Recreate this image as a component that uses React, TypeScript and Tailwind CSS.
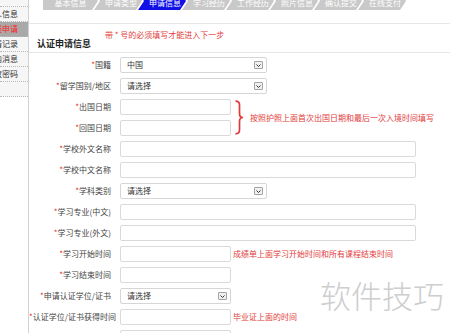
import React from "react";

const steps = ["基本信息", "申请类型", "申请信息", "学习经历", "工作经历", "照片信息", "确认提交", "在线支付"];

const sideItems = ["", "个人信息", "在线申请", "申请记录", "站内消息", "修改密码", ""];

type W = "S" | "M" | "L";
const widthCls: Record<W, string> = { S: "w-[111px]", M: "w-[147px]", L: "w-[296px]" };

type Row = { label: string; kind: "select" | "input"; w: W; value?: string; note?: string };

const Label = ({ text }: { text: string }) => (
  <div className="w-[82px] shrink-0 whitespace-nowrap text-right text-[8px] leading-[10px] text-[#444]">
    <span className="text-[#e52b2b]">*</span>
    {text}
  </div>
);

const Arrow = () => (
  <span className="flex h-[8px] w-[9px] items-center justify-center rounded-[1px] border border-[#a3a3a3] bg-[#f1f1f1]">
    <svg width="5" height="3" viewBox="0 0 5 3">
      <path d="M0.5 0.5 L2.5 2.5 L4.5 0.5" fill="none" stroke="#333" strokeWidth="1" />
    </svg>
  </span>
);

const Field = ({ row }: { row: Row }) =>
  row.kind === "select" ? (
    <div
      className={`${widthCls[row.w]} ml-[9px] flex h-[16px] shrink-0 items-center justify-between rounded-[2px] border border-[#d6d6d6] bg-white pl-[6px] pr-[3px] text-[8px] text-[#333]`}
    >
      <span>{row.value}</span>
      <Arrow />
    </div>
  ) : (
    <div className={`${widthCls[row.w]} ml-[9px] h-[16px] shrink-0 rounded-[2px] border border-[#d9d9d9] bg-white`} />
  );

const FormRow = ({ row }: { row: Row }) => (
  <div className="flex h-[16px] items-center">
    <Label text={row.label} />
    <Field row={row} />
    {row.note && <span className="ml-[2px] whitespace-nowrap text-[8px] text-[#e23b3b]">{row.note}</span>}
  </div>
);

const before: Row[] = [
  { label: "国籍", kind: "select", w: "M", value: "中国" },
  { label: "留学国别/地区", kind: "select", w: "M", value: "请选择" },
];
const dates: Row[] = [
  { label: "出国日期", kind: "input", w: "S" },
  { label: "回国日期", kind: "input", w: "S" },
];
const after: Row[] = [
  { label: "学校外文名称", kind: "input", w: "L" },
  { label: "学校中文名称", kind: "input", w: "L" },
  { label: "学科类别", kind: "select", w: "M", value: "请选择" },
  { label: "学习专业(中文)", kind: "input", w: "L" },
  { label: "学习专业(外文)", kind: "input", w: "L" },
  { label: "学习开始时间", kind: "input", w: "S", note: "成绩单上面学习开始时间和所有课程结束时间" },
  { label: "学习结束时间", kind: "input", w: "S" },
  { label: "申请认证学位/证书", kind: "select", w: "S", value: "请选择" },
  { label: "认证学位/证书获得时间", kind: "input", w: "S", note: "毕业证上面的时间" },
  { label: "认证学位/证书编号", kind: "input", w: "S" },
];

export default function App() {
  return (
    <div className="relative flex h-[333px] w-[450px] overflow-hidden bg-white font-['Noto_Sans_CJK_SC',sans-serif]">
      {/* sidebar */}
      <div className="-mt-[8px] w-[28px] shrink-0 self-start bg-[#f6f6f6]">
        {sideItems.map((t, i) => (
          <div
            key={i}
            className={`flex h-[15px] items-center justify-end overflow-hidden border-b border-dotted border-[#b8b8b8] pr-[10px] text-[8px] ${
              i === 2 ? "bg-[#a9a9a9] text-[#ff2020]" : "text-[#333]"
            }`}
          >
            <span className="shrink-0 whitespace-nowrap">{t}</span>
          </div>
        ))}
      </div>

      {/* main */}
      <div className="min-w-0 flex-1 border-l border-[#d2d2d2]">
        {/* steps */}
        <div className="-mt-[8px] ml-[14px] flex h-[18px]">
          {steps.map((s, i) => (
            <div
              key={s}
              className={`flex h-full items-center justify-center pt-[4px] text-[8px] text-white ${
                i === 0
                  ? "w-[55px] [clip-path:polygon(0_0,calc(100%_-_6px)_0,100%_50%,calc(100%_-_6px)_100%,0_100%)]"
                  : "-ml-[4px] w-[48px] pl-[6px] [clip-path:polygon(0_0,calc(100%_-_6px)_0,100%_50%,calc(100%_-_6px)_100%,0_100%,6px_50%)]"
              } ${i === 2 ? "bg-[#1111e6]" : "bg-[#c9c9c9]"}`}
            >
              {s}
            </div>
          ))}
        </div>

        {/* header */}
        <div className="mt-[13px] border-y border-[#e6e6e6] pb-[4px] pt-[6px]">
          <div className="ml-[76px] whitespace-nowrap text-[8px] leading-[9px] text-[#e23b3b]">带 * 号的必须填写才能进入下一步</div>
          <div className="pl-[8px] text-[9px] font-bold leading-[9px] text-[#222]">认证申请信息</div>
        </div>

        {/* form */}
        <div className="flex flex-col gap-[5px] pt-[4px]">
          {before.map((r) => (
            <FormRow key={r.label} row={r} />
          ))}
          <div className="flex items-center">
            <div className="flex flex-col gap-[5px]">
              {dates.map((r) => (
                <FormRow key={r.label} row={r} />
              ))}
            </div>
            <svg className="ml-[3px] shrink-0" width="10" height="35" viewBox="0 0 10 35">
              <path
                d="M1.5 1.2 Q5.5 1.2 5.5 5 L5.5 13.5 Q5.5 17.5 9 17.5 Q5.5 17.5 5.5 21.5 L5.5 30 Q5.5 33.8 1.5 33.8"
                fill="none"
                stroke="#e03a3a"
                strokeWidth="1.7"
              />
            </svg>
            <span className="ml-[6px] whitespace-nowrap text-[8px] text-[#e23b3b]">按照护照上面首次出国日期和最后一次入境时间填写</span>
          </div>
          {after.map((r) => (
            <FormRow key={r.label} row={r} />
          ))}
        </div>
      </div>

      {/* watermark */}
      <div className="pointer-events-none absolute left-[320px] top-[279px] whitespace-nowrap text-[31px] font-light leading-none text-[#c2c2c2] opacity-80">
        软件技巧
      </div>
    </div>
  );
}
